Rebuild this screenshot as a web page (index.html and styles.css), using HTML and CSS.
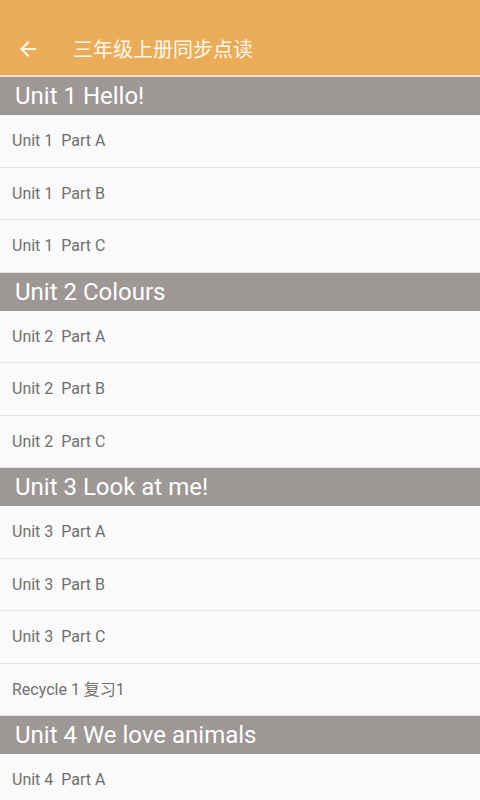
FILE: index.html
```html
<!DOCTYPE html>
<html lang="zh">
<head>
    <meta charset="UTF-8">
    <meta name="viewport" content="width=device-width, initial-scale=1.0">
    <title>三年级上册同步点读</title>
    <link rel="stylesheet" href="styles.css">
</head>
<body>

<header class="toolbar">
    <svg class="back" viewBox="0 0 24 24" width="24" height="24">
        <path d="M20 11H7.83l5.59-5.59L12 4l-8 8 8 8 1.41-1.41L7.83 13H20v-2z" fill="#fff6ea"/>
    </svg>
    <h1>三年级上册同步点读</h1>
</header>

<div class="list">
    <div class="section">Unit 1 Hello!</div>
    <div class="item">Unit 1&nbsp; Part A</div>
    <div class="item">Unit 1&nbsp; Part B</div>
    <div class="item">Unit 1&nbsp; Part C</div>

    <div class="section">Unit 2 Colours</div>
    <div class="item">Unit 2&nbsp; Part A</div>
    <div class="item">Unit 2&nbsp; Part B</div>
    <div class="item">Unit 2&nbsp; Part C</div>

    <div class="section">Unit 3 Look at me!</div>
    <div class="item">Unit 3&nbsp; Part A</div>
    <div class="item">Unit 3&nbsp; Part B</div>
    <div class="item">Unit 3&nbsp; Part C</div>
    <div class="item">Recycle 1 复习1</div>

    <div class="section">Unit 4 We love animals</div>
    <div class="item">Unit 4&nbsp; Part A</div>
</div>

</body>
</html>
```

FILE: styles.css
```css
body {
    margin: 0;
    background-color: #fafafa;
    font-family: Roboto, "Noto Sans CJK SC", sans-serif;
    overflow: hidden;
}

.toolbar {
    height: 77px;
    background-color: #eaac59;
    border-bottom: 2px solid #f6e7c9;
    display: flex;
    align-items: center;
    padding-top: 22px;
    box-sizing: border-box;
}

.back {
    margin-left: 16px;
    flex-shrink: 0;
}

.toolbar h1 {
    margin: 0 0 0 33px;
    font-size: 20px;
    font-weight: normal;
    color: #fff6ea;
    font-family: "Noto Sans CJK SC", sans-serif;
}

.section {
    height: 38px;
    line-height: 39px;
    background-color: #9d9796;
    color: #ffffff;
    font-size: 24px;
    padding-left: 15px;
}

.item {
    height: 51.5px;
    line-height: 51px;
    border-bottom: 1px solid #e4e4e4;
    padding-left: 12px;
    font-size: 16px;
    color: #707070;
}
```
